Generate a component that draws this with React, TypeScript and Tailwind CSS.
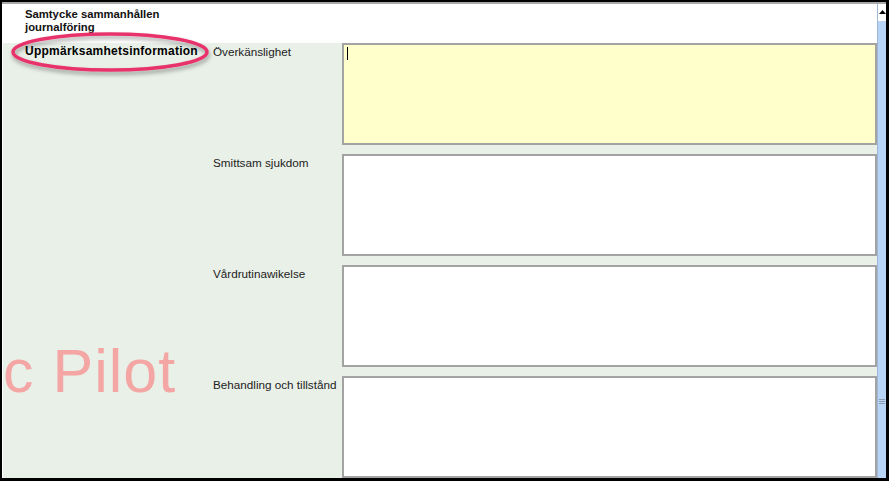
import React from "react";

const fields = [
  { label: "Överkänslighet", active: true },
  { label: "Smittsam sjukdom", active: false },
  { label: "Vårdrutinawikelse", active: false },
  { label: "Behandling och tillstånd", active: false },
];

export default function App() {
  return (
    <div
      className="relative w-[889px] h-[481px] overflow-hidden bg-black pl-[2px] pt-[2px] pr-[3px] pb-[3px] text-[11px] leading-[13px] text-[#111]"
      style={{ fontFamily: '"Liberation Sans", Arial, sans-serif' }}
    >
      <div className="flex h-full flex-col border-t-2 border-[#a8a8a8] bg-white">
        <div className="flex flex-1 min-h-0">
          {/* main panel */}
          <div className="flex flex-1 min-w-0 flex-col pl-[1px]">
            <div className="h-[39px] shrink-0 bg-white pl-[22px] pt-[4px] text-[11.3px] font-bold">
              <div>Samtycke sammanhållen</div>
              <div>journalföring</div>
            </div>
            <div className="flex flex-1 min-h-0 bg-[#e9f0e8]">
              <div className="w-[208px] shrink-0 pl-[22px] pt-[2px] text-[12px] font-bold tracking-[0.25px] text-black">
                Uppmärksamhetsinformation
              </div>
              <div className="flex flex-1 min-w-0 flex-col gap-[9px]">
                {fields.map((f) => (
                  <div key={f.label} className="flex h-[102px] shrink-0">
                    <div className="w-[131px] shrink-0 pl-[2px] pt-[2px] text-[11.7px] text-[#222]">
                      {f.label}
                    </div>
                    <div
                      className={
                        "relative flex-1 border-2 border-[#a3a3a3] " +
                        (f.active ? "bg-[#ffffcc]" : "bg-white")
                      }
                    >
                      {f.active && (
                        <div className="absolute left-[3px] top-[2px] h-[13px] w-[1px] bg-black" />
                      )}
                    </div>
                  </div>
                ))}
              </div>
            </div>
          </div>

          {/* scrollbar */}
          <div className="flex w-[9px] shrink-0 flex-col border-l border-[#9fb7d6] bg-[#b7d3f6]">
            <div className="flex h-[17px] items-start justify-center bg-white pt-[6px]">
              <svg width="7" height="4" viewBox="0 0 7 4">
                <path d="M0 4 L3.5 0 L7 4 Z" fill="#000" />
              </svg>
            </div>
            <div className="flex flex-1 flex-col items-center justify-end pb-[74px]">
              <div className="flex flex-col gap-[1px]">
                <div className="h-[1px] w-[6px] bg-[#8a9bb0]" />
                <div className="h-[1px] w-[6px] bg-[#8a9bb0]" />
                <div className="h-[1px] w-[6px] bg-[#8a9bb0]" />
              </div>
            </div>
          </div>
        </div>
      </div>

      {/* highlight ellipse */}
      <svg
        className="pointer-events-none absolute left-0 top-0"
        width="240"
        height="90"
        viewBox="0 0 240 90"
      >
        <defs>
          <filter id="sh" x="-10%" y="-30%" width="120%" height="160%">
            <feDropShadow dx="1" dy="3" stdDeviation="2" floodColor="#000" floodOpacity="0.35" />
          </filter>
        </defs>
        <ellipse
          cx="110"
          cy="52"
          rx="97"
          ry="18"
          fill="none"
          stroke="#e8336c"
          strokeWidth="3.5"
          filter="url(#sh)"
        />
      </svg>

      {/* watermark */}
      <div className="pointer-events-none absolute left-[3px] top-[335px] text-[61px] leading-[72px] tracking-[1px] text-[#f4a6a4]">
        c Pilot
      </div>
    </div>
  );
}
